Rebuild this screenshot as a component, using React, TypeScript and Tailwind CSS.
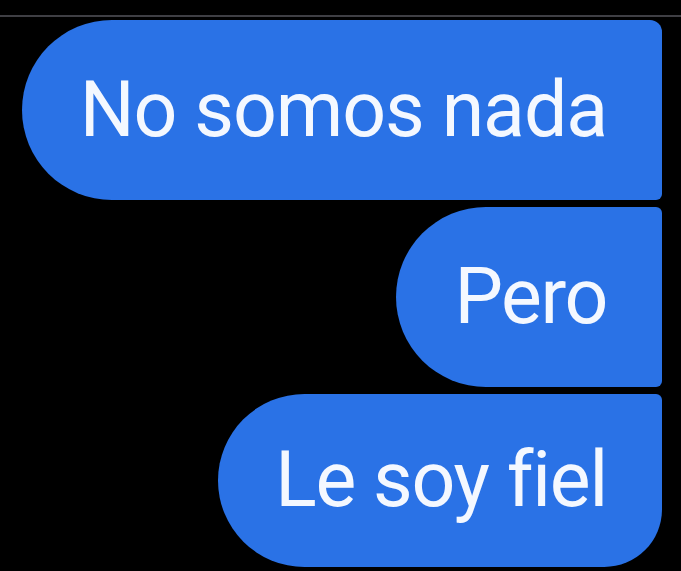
import React from "react";

const font = { fontFamily: "Roboto, 'Noto Sans', sans-serif" };

export default function App() {
  return (
    <div className="w-full h-[571px] bg-black overflow-hidden pt-[15px]" style={font}>
      <div className="h-[2px] bg-[#3f3f44]" />
      <div className="flex flex-col items-end gap-[7px] pt-[3px] pr-[19px]">
        <div className="h-[180px] flex items-center pl-[58px] pr-[55px] bg-[#2a72e6] text-[#f4f8ff] text-[77px] leading-none rounded-l-[90px] rounded-tr-[12px] rounded-br-[6px] tracking-[-1.1px]">
          No somos nada
        </div>
        <div className="h-[180px] flex items-center pl-[58px] pr-[55px] bg-[#2a72e6] text-[#f4f8ff] text-[77px] leading-none rounded-l-[90px] rounded-r-[6px] tracking-[-1.4px]">
          Pero
        </div>
        <div className="h-[173px] flex items-center pl-[57px] pr-[55px] bg-[#2a72e6] text-[#f4f8ff] text-[77px] leading-none rounded-l-[87px] rounded-tr-[6px] rounded-br-[58px] tracking-[-1.2px]">
          Le soy fiel
        </div>
      </div>
    </div>
  );
}
